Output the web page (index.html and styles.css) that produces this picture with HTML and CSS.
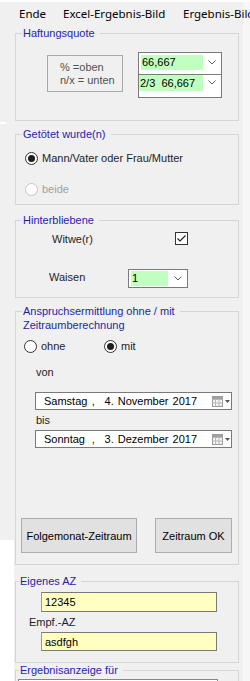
FILE: index.html
```html
<!DOCTYPE html>
<html lang="de">
<head>
<meta charset="utf-8">
<title>Haftungsquote</title>
<link rel="stylesheet" href="styles.css">
</head>
<body>
<div class="menubar">
  <span class="menu-item menu-ende">Ende</span>
  <span class="menu-item menu-excel">Excel-Ergebnis-Bild</span>
  <span class="menu-item menu-bild">Ergebnis-Bild</span>
</div>

<div class="main">
  <fieldset class="group g1">
    <legend>Haftungsquote</legend>
    <div class="g1-body">
      <div class="quote-label">
        <div>% =oben</div>
        <div>n/x = unten</div>
      </div>
      <div class="combos">
        <div class="combo combo-a">
          <span class="combo-val">66,667</span>
          <span class="combo-btn"><svg width="8" height="5" viewBox="0 0 8 5"><polyline points="0.5,0.5 4,4 7.5,0.5" fill="none" stroke="#606060" stroke-width="1"/></svg></span>
        </div>
        <div class="combo combo-b">
          <span class="combo-val">2/3  66,667</span>
          <span class="combo-btn"><svg width="8" height="5" viewBox="0 0 8 5"><polyline points="0.5,0.5 4,4 7.5,0.5" fill="none" stroke="#606060" stroke-width="1"/></svg></span>
        </div>
      </div>
    </div>
  </fieldset>

  <fieldset class="group g2">
    <legend>Getötet wurde(n)</legend>
    <div class="g2-body">
      <div class="radio-row"><span class="radio checked"></span><span>Mann/Vater oder Frau/Mutter</span></div>
      <div class="radio-row disabled"><span class="radio"></span><span>beide</span></div>
    </div>
  </fieldset>

  <fieldset class="group g3">
    <legend>Hinterbliebene</legend>
    <div class="g3-body">
      <div class="witwe-row">
        <span class="witwe-label">Witwe(r)</span>
        <span class="checkbox"><svg width="11" height="11" viewBox="0 0 11 11"><polyline points="1.5,5.5 4,8 9.5,2.5" fill="none" stroke="#222" stroke-width="1.2"/></svg></span>
      </div>
      <div class="waisen-row">
        <span class="waisen-label">Waisen</span>
        <div class="combo combo-w">
          <span class="combo-val">1</span>
          <span class="combo-btn"><svg width="8" height="5" viewBox="0 0 8 5"><polyline points="0.5,0.5 4,4 7.5,0.5" fill="none" stroke="#606060" stroke-width="1"/></svg></span>
        </div>
      </div>
    </div>
  </fieldset>

  <fieldset class="group g4">
    <legend>Anspruchsermittlung ohne / mit</legend>
    <div class="g4-body">
      <div class="legend-line2">Zeitraumberechnung</div>
      <div class="mode-row">
        <div class="radio-row mode-ohne"><span class="radio"></span><span>ohne</span></div>
        <div class="radio-row"><span class="radio checked"></span><span>mit</span></div>
      </div>
      <div class="date-label von">von</div>
      <div class="datepicker">
        <span class="dp-day">Samstag</span><span class="dp-comma">,</span><span class="dp-date">4. November 2017</span>
        <span class="dp-icon"><svg width="19" height="11" viewBox="0 0 19 11"><rect x="0.5" y="0.5" width="10" height="10" fill="#f4f4f4" stroke="#9a9a9a"/><path d="M0.5 3.5H10.5M3.5 3.5V10.5M7 3.5V10.5M0.5 7H10.5" stroke="#b8b8b8" fill="none"/><rect x="0.5" y="0.5" width="10" height="2.5" fill="#a0a0a0"/><polygon points="13,4 18,4 15.5,7" fill="#555"/></svg></span>
      </div>
      <div class="date-label bis">bis</div>
      <div class="datepicker">
        <span class="dp-day">Sonntag</span><span class="dp-comma">,</span><span class="dp-date">3. Dezember 2017</span>
        <span class="dp-icon"><svg width="19" height="11" viewBox="0 0 19 11"><rect x="0.5" y="0.5" width="10" height="10" fill="#f4f4f4" stroke="#9a9a9a"/><path d="M0.5 3.5H10.5M3.5 3.5V10.5M7 3.5V10.5M0.5 7H10.5" stroke="#b8b8b8" fill="none"/><rect x="0.5" y="0.5" width="10" height="2.5" fill="#a0a0a0"/><polygon points="13,4 18,4 15.5,7" fill="#555"/></svg></span>
      </div>
      <div class="button-row">
        <button class="btn btn-folge" type="button">Folgemonat-Zeitraum</button>
        <button class="btn btn-ok" type="button">Zeitraum OK</button>
      </div>
    </div>
  </fieldset>

  <fieldset class="group g5">
    <legend>Eigenes AZ</legend>
    <div class="g5-body">
      <div class="text-input az1">12345</div>
      <div class="empf-label">Empf.-AZ</div>
      <div class="text-input az2">asdfgh</div>
    </div>
  </fieldset>

  <fieldset class="group g6">
    <legend>Ergebnisanzeige für</legend>
    <div class="g6-body">
      <div class="listbox"></div>
    </div>
  </fieldset>
</div>
</body>
</html>
```

FILE: styles.css
```css
* {
  box-sizing: border-box;
}

html, body {
  margin: 0;
  padding: 0;
}

body {
  width: 250px;
  height: 681px;
  overflow: hidden;
  font-family: "Liberation Sans", Arial, sans-serif;
  font-size: 11px;
  color: #1e1e1e;
  background:
    linear-gradient(#ffffff, #ffffff) 0 0 / 250px 2px no-repeat,
    linear-gradient(#ffffff, #ffffff) 0 122px / 6px 2px no-repeat,
    linear-gradient(#ffffff, #ffffff) 0 540px / 14px 141px no-repeat,
    linear-gradient(#f6f6f6, #f6f6f6) 243px 0 / 7px 681px no-repeat,
    #f0f0f0;
}

/* ---------- menu ---------- */
.menubar {
  height: 22px;
  display: flex;
  padding: 6px 0 0 19px;
  white-space: nowrap;
  overflow: hidden;
  font-family: "Noto Sans", "Open Sans", sans-serif;
  font-size: 11.5px;
  line-height: 16px;
  color: #000;
}

.menu-item {
  flex: none;
}

.menu-ende {
  width: 44px;
}

.menu-excel {
  width: 120px;
}

/* ---------- group boxes ---------- */
.main {
  padding-top: 5px;
}

.group {
  width: 224px;
  margin: 0 0 0 15px;
  padding: 0;
  border: 1px solid #d5d5d5;
  min-width: 0;
}

.group legend {
  margin-left: 6px;
  padding: 0 5px 0 1px;
  font-size: 11px;
  line-height: 12px;
  color: #1f1fa8;
  white-space: nowrap;
}

.g2 { margin-top: 7px; }
.g3 { margin-top: 9px; }
.g4 { margin-top: 7px; }
.g5 { margin-top: 10px; }
.g6 { margin-top: 1px; }

.g5 legend,
.g6 legend {
  margin-left: 3px;
}

/* ---------- group 1 ---------- */
.g1-body {
  height: 81px;
  display: flex;
  align-items: flex-start;
  padding: 13px 0 0 31px;
}

.quote-label {
  width: 76px;
  height: 37px;
  margin-top: 3px;
  border: 1px solid #a8a8a8;
  padding: 5px 0 0 12px;
  color: #505050;
  line-height: 13px;
}

.combos {
  margin-left: 15px;
  width: 84px;
  display: flex;
  flex-direction: column;
}

.combo {
  display: flex;
  align-items: stretch;
  border: 1px solid #7a7a7a;
  background: #ffffff;
  color: #000;
}

.combo-val {
  background: #c0ffc0;
  white-space: pre;
  line-height: 15px;
  padding-left: 1px;
}

.combo-btn {
  flex: 1;
  display: flex;
  align-items: center;
  justify-content: center;
}

.combo-a {
  height: 23px;
  padding: 2px 0 4px 2px;
}

.combo-a .combo-val {
  width: 62px;
}

.combo-b {
  height: 24px;
  margin-top: -1px;
  padding: 0 0 8px 0;
}

.combo-b .combo-val {
  width: 63px;
  padding-top: 1px;
  height: 15px;
  box-sizing: content-box;
}

/* ---------- radios ---------- */
.radio-row {
  display: flex;
  align-items: center;
  gap: 4px;
  height: 16px;
  white-space: nowrap;
}

.radio {
  width: 13px;
  height: 13px;
  border: 1px solid #333333;
  border-radius: 50%;
  background: #ffffff;
  display: flex;
  align-items: center;
  justify-content: center;
  flex: none;
}

.radio.checked::after {
  content: "";
  width: 7px;
  height: 7px;
  border-radius: 50%;
  background: #1e1e1e;
}

.radio-row.disabled {
  color: #a0a0a0;
}

.radio-row.disabled .radio {
  border-color: #c4c4c4;
}

/* ---------- group 2 ---------- */
.g2-body {
  height: 64px;
  padding: 10px 0 0 9px;
  display: flex;
  flex-direction: column;
  gap: 15px;
}

/* ---------- group 3 ---------- */
.g3-body {
  height: 71px;
  padding: 6px 0 0 36px;
}

.witwe-row {
  display: flex;
  align-items: center;
  height: 13px;
}

.witwe-label {
  width: 123px;
}

.checkbox {
  width: 13px;
  height: 13px;
  border: 1px solid #333333;
  background: #ffffff;
  display: flex;
  align-items: center;
  justify-content: center;
}

.waisen-row {
  display: flex;
  align-items: center;
  margin-top: 24px;
  margin-left: -3px;
}

.waisen-label {
  width: 79px;
  padding-bottom: 3px;
}

.combo-w {
  width: 60px;
  height: 19px;
  padding: 1px 0 1px 2px;
}

.combo-w .combo-val {
  width: 37px;
}

/* ---------- group 4 ---------- */
.g4-body {
  height: 247px;
  padding: 0 0 0 0;
  display: flex;
  flex-direction: column;
}

.legend-line2 {
  margin: 2px 0 0 7px;
  line-height: 13px;
  color: #1f1fa8;
}

.mode-row {
  display: flex;
  margin-top: 6px;
  padding-left: 8px;
}

.mode-ohne {
  width: 80px;
}

.date-label {
  line-height: 12px;
  padding-left: 20px;
}

.von {
  margin-top: 12px;
}

.bis {
  margin-top: 4px;
}

.datepicker {
  width: 197px;
  height: 18px;
  margin: 14px 0 0 19px;
  border: 1px solid #7a7a7a;
  background: #ffffff;
  display: flex;
  align-items: center;
  padding-left: 8px;
  color: #000;
  white-space: nowrap;
}

.bis + .datepicker {
  margin-top: 4px;
}

.dp-day {
  width: 49px;
}

.dp-comma {
  width: 13px;
}

.dp-date {
  width: 108px;
  word-spacing: 1px;
}

.dp-icon {
  display: flex;
  margin-left: 2px;
}

.button-row {
  display: flex;
  gap: 18px;
  margin-top: 70px;
  padding-left: 5px;
}

.btn {
  height: 35px;
  margin: 0;
  padding: 0;
  border: 1px solid #adadad;
  background: #e1e1e1;
  font-family: "Liberation Sans", Arial, sans-serif;
  font-size: 11px;
  color: #000;
}

.btn-folge {
  width: 116px;
}

.btn-ok {
  width: 77px;
}

/* ---------- group 5 ---------- */
.g5-body {
  height: 75px;
  padding: 5px 0 0 25px;
}

.text-input {
  width: 176px;
  height: 20px;
  border: 1px solid #7a7a7a;
  border-left-color: #9a9a9a;
  background: #ffffc0;
  line-height: 18px;
  padding-left: 3px;
  color: #000;
}

.empf-label {
  margin: 4px 0 0 -12px;
  line-height: 12px;
  height: 12px;
}

.az2 {
  margin-top: 4px;
  height: 19px;
}

/* ---------- group 6 ---------- */
.g6-body {
  height: 6px;
  padding: 3px 0 0 2px;
}

.listbox {
  width: 200px;
  height: 3px;
  border: 1px solid #828790;
  border-bottom: 0;
  background: #ffffff;
}
```
